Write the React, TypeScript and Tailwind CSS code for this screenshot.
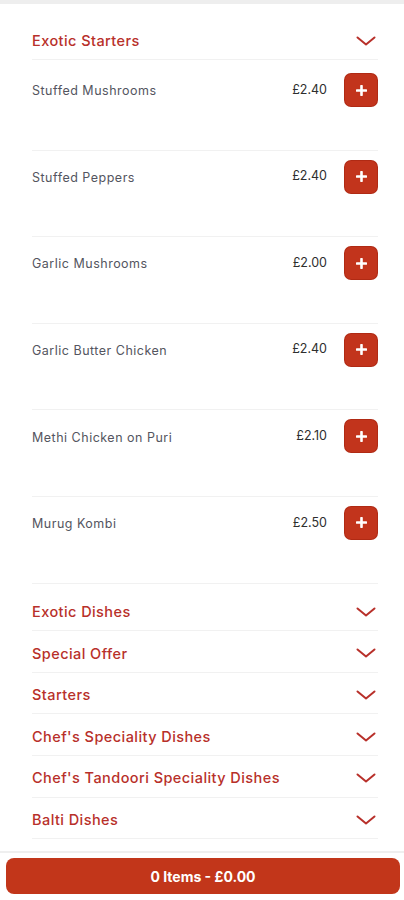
import React from 'react'

const items = [
  { name: 'Stuffed Mushrooms', price: '£2.40' },
  { name: 'Stuffed Peppers', price: '£2.40' },
  { name: 'Garlic Mushrooms', price: '£2.00' },
  { name: 'Garlic Butter Chicken', price: '£2.40' },
  { name: 'Methi Chicken on Puri', price: '£2.10' },
  { name: 'Murug Kombi', price: '£2.50' },
]

const categories = [
  'Exotic Dishes',
  'Special Offer',
  'Starters',
  "Chef's Speciality Dishes",
  "Chef's Tandoori Speciality Dishes",
  'Balti Dishes',
]

function Chevron() {
  return (
    <svg width="20" height="10" viewBox="0 0 20 10" fill="none" xmlns="http://www.w3.org/2000/svg">
      <path d="M1.5 1.5L10 8.5L18.5 1.5" stroke="#b8302a" strokeWidth="2" strokeLinecap="round" strokeLinejoin="round" />
    </svg>
  )
}

function AddButton() {
  return (
    <button className="mr-px flex h-8 w-8 shrink-0 items-center justify-center rounded-md bg-[#c2341c] shadow-[0_0_0_1px_#b02a14]">
      <svg width="11" height="11" viewBox="0 0 11 11" fill="none" xmlns="http://www.w3.org/2000/svg">
        <path d="M5.5 1V10M1 5.5H10" stroke="white" strokeWidth="2.6" strokeLinecap="round" />
      </svg>
    </button>
  )
}

export default function App() {
  return (
    <div className="min-h-[900px] bg-white font-['Inter',sans-serif]">
      <div className="h-1 bg-[#eeeeee]" />

      <div className="pl-8 pr-[26px]">
        <div className="flex items-center justify-between border-b border-[#f1f1f1] pt-[27px] pb-2">
          <h2 className="text-[14.5px] leading-5 font-medium tracking-[0.03em] text-[#b8302a]">Exotic Starters</h2>
          <span className="mr-[2px]">
            <Chevron />
          </span>
        </div>

        {items.map((item, index) => (
          <div
            key={index}
            className={`flex items-center border-b border-[#f1f1f1] pb-[43.6px] ${index === 0 ? 'pt-[14px]' : 'pt-[10px]'}`}
          >
            <p className="mt-[3px] flex-1 text-[12.5px] tracking-[0.04em] text-[#545560]">{item.name}</p>
            <span className="mr-[18px] text-[12.5px] text-[#2e2e2e]">{item.price}</span>
            <AddButton />
          </div>
        ))}

        <div className="pt-[6px] pb-3">
          {categories.map((cat) => (
            <div key={cat} className="flex h-[41.6px] items-center justify-between border-b border-[#f1f1f1] pt-1">
              <span className="text-[14.5px] font-medium tracking-[0.03em] text-[#b8302a]">{cat}</span>
              <span className="mr-[2px]">
                <Chevron />
              </span>
            </div>
          ))}
        </div>
      </div>

      <div className="border-t-2 border-[#efefef] pt-[5px] pr-1 pl-[6px]">
        <button className="flex h-9 w-full items-center justify-center rounded-lg bg-[#c2361a] text-[14px] font-bold text-white">
          0 Items - £0.00
        </button>
      </div>
    </div>
  )
}
